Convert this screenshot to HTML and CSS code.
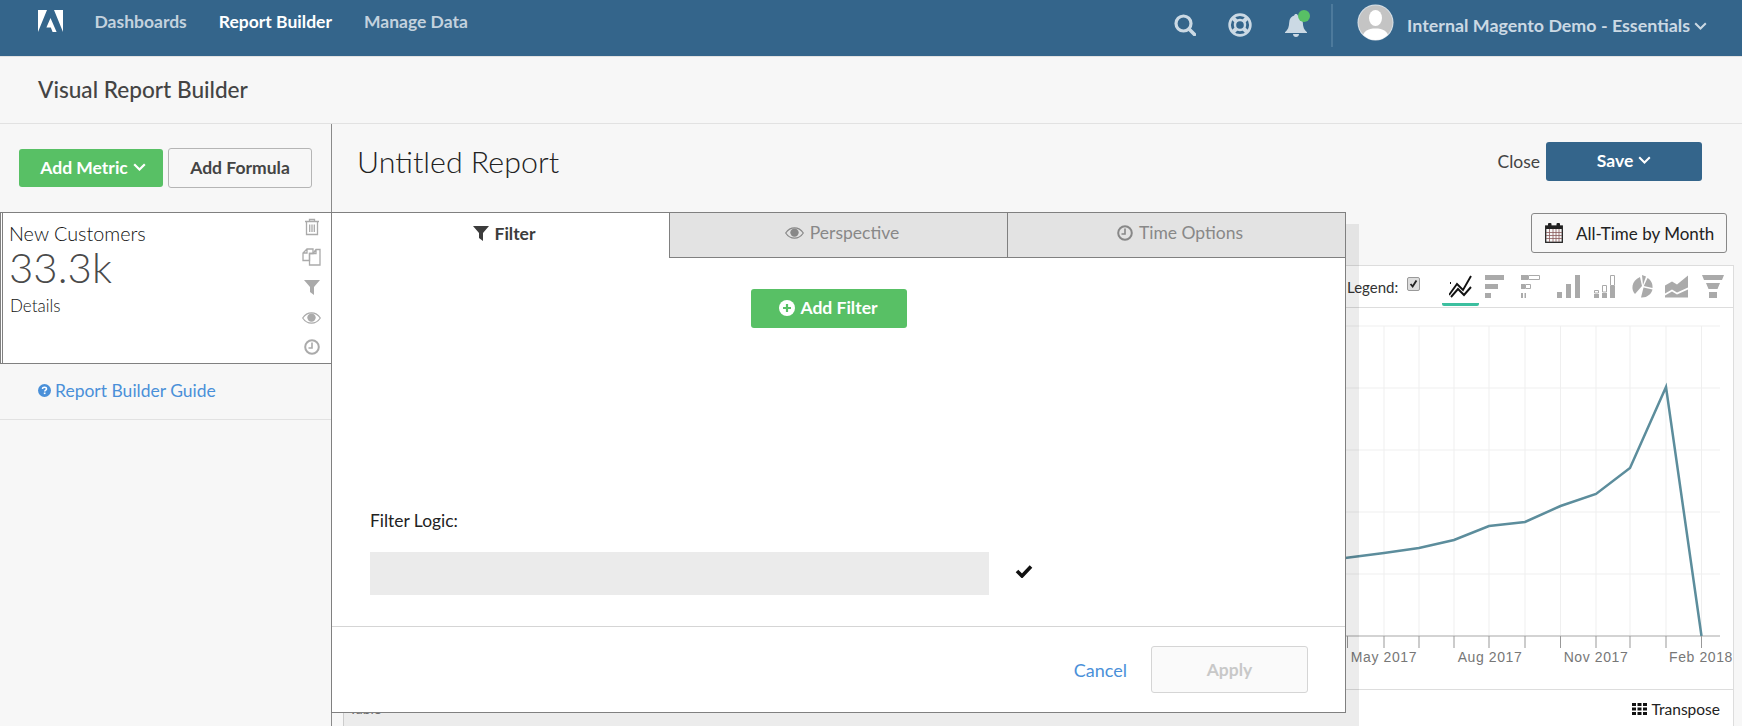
FILE: index.html
```html
<!DOCTYPE html>
<html lang="en">
<head>
<meta charset="utf-8">
<title>Visual Report Builder</title>
<link rel="stylesheet" href="styles.css">
</head>
<body>
<nav class="nav">
  <svg class="logo" viewBox="0 0 25 22"><path d="M0 0H9L0 22ZM16 0H25V22ZM12.5 8L18.6 22H14.6L12.8 17.4H8.4Z" fill="#fff"/></svg>
  <a class="nav-link">Dashboards</a>
  <a class="nav-link active">Report Builder</a>
  <a class="nav-link">Manage Data</a>
  <div class="nav-right">
    <svg class="ic-search" viewBox="0 0 22 22"><circle cx="9.5" cy="9.5" r="7.5" fill="none" stroke="#cbd9e4" stroke-width="3.2"/><path d="M15 15L20.5 20.5" stroke="#cbd9e4" stroke-width="3.6" stroke-linecap="round"/></svg>
    <svg class="ic-help" viewBox="0 0 24 24"><circle cx="12" cy="12" r="10.4" fill="none" stroke="#cbd9e4" stroke-width="2.6"/><circle cx="12" cy="12" r="5" fill="none" stroke="#cbd9e4" stroke-width="2.4"/><path d="M4.5 4.5L8.5 8.5M19.5 4.5L15.5 8.5M4.5 19.5L8.5 15.5M19.5 19.5L15.5 15.5" stroke="#cbd9e4" stroke-width="4"/></svg>
    <span class="bell-wrap">
      <svg class="ic-bell" viewBox="0 0 22 24"><path d="M11 1C12 1 12.800 1.700 12.800 2.600C16 3.400 17.600 6 17.800 9.500C18 14 19 16.800 22 19.200V20H0V19.200C3 16.800 4 14 4.200 9.500C4.400 6 6 3.400 9.200 2.600C9.200 1.700 10 1 11 1ZM8 21H14C14 22.800 12.600 24 11 24C9.400 24 8 22.800 8 21Z" fill="#cbd9e4"/></svg>
      <span class="bell-dot"></span>
    </span>
    <span class="nav-divider"></span>
    <svg class="avatar" viewBox="0 0 37 37"><defs><clipPath id="av"><circle cx="18.500" cy="18.500" r="17.500"/></clipPath></defs><circle cx="18.500" cy="18.500" r="18" fill="#d7e0e7"/><circle cx="18.500" cy="18.500" r="17" fill="#c4c4c4"/><g clip-path="url(#av)"><ellipse cx="18.500" cy="14" rx="6.500" ry="8" fill="#fff"/><path d="M5 37C5 27 11 24.500 18.500 24.500S32 27 32 37Z" fill="#fff"/></g></svg>
    <span class="account">Internal Magento Demo - Essentials</span>
    <svg class="caret caret-nav" viewBox="0 0 13 8"><path d="M1.200 1.200L6.500 6.500L11.800 1.200" fill="none" stroke="#cbd9e4" stroke-width="2"/></svg>
  </div>
</nav>

<header class="subheader"><h1 class="page-title">Visual Report Builder</h1></header>

<div class="workspace">
  <aside class="sidebar">
    <div class="side-actions">
      <button class="btn btn-green btn-metric">Add Metric <svg class="caret" viewBox="0 0 13 8"><path d="M1.200 1.200L6.500 6.500L11.800 1.200" fill="none" stroke="#fff" stroke-width="2.200"/></svg></button>
      <button class="btn btn-outline">Add Formula</button>
    </div>
    <section class="metric-card">
      <div class="metric-text">
        <div class="metric-name">New Customers</div>
        <div class="metric-value">33.3k</div>
        <div class="metric-details">Details</div>
      </div>
      <div class="metric-icons">
        <svg class="mi mi-trash" viewBox="0 0 16 18"><path d="M1 3.500H15M5.500 3.500V1.500H10.500V3.500M2.500 3.500V16.500H13.500V3.500M5.700 6.500V14M8 6.500V14M10.300 6.500V14" fill="none" stroke="#aaa" stroke-width="1.300"/></svg>
        <svg class="mi mi-copy" viewBox="0 0 19 18"><path d="M5 1H11V5.500H7.500V12.500H1V5ZM5 1V5H1" fill="none" stroke="#aaa" stroke-width="1.300"/><path d="M7.500 5.500H11L14 1.500H18V17H7.500ZM14 1.500V5.500H11" fill="none" stroke="#aaa" stroke-width="1.300"/></svg>
        <svg class="mi mi-filter" viewBox="0 0 16 15"><path d="M0 0H16L10 7V15L6 12V7Z" fill="#aaa"/></svg>
        <svg class="mi mi-eye" viewBox="0 0 19 12"><path d="M.7 6C3 2.500 6 .8 9.500 .8S16 2.500 18.300 6C16 9.500 13 11.200 9.500 11.200S3 9.500 .7 6Z" fill="none" stroke="#aaa" stroke-width="1.200"/><circle cx="9.500" cy="5.600" r="4.200" fill="#aaa"/></svg>
        <svg class="mi mi-clock" viewBox="0 0 16 16"><circle cx="8" cy="8" r="6.800" fill="none" stroke="#aaa" stroke-width="2"/><path d="M8 3.500V9H4.500" fill="none" stroke="#aaa" stroke-width="1.600"/></svg>
      </div>
    </section>
    <div class="guide">
      <svg class="guide-icon" viewBox="0 0 13 13"><circle cx="6.500" cy="6.500" r="6.500" fill="#4a90d9"/><path d="M4.500 5C4.500 3.800 5.400 3.200 6.500 3.200S8.500 3.800 8.500 4.900C8.500 6.200 6.700 6.200 6.700 7.600" fill="none" stroke="#fff" stroke-width="1.500"/><rect x="5.800" y="8.500" width="1.700" height="1.600" fill="#fff"/></svg>
      <a class="guide-link">Report Builder Guide</a>
    </div>
  </aside>

  <main class="main">
    <div class="title-row">
      <h2 class="report-title">Untitled Report</h2>
      <div class="title-actions">
        <span class="close-link">Close</span>
        <button class="btn btn-blue">Save <svg class="caret" viewBox="0 0 13 8"><path d="M1.200 1.200L6.500 6.500L11.800 1.200" fill="none" stroke="#fff" stroke-width="2"/></svg></button>
      </div>
    </div>
    <div class="range-row">
      <button class="btn-range">
        <svg class="ic-cal" viewBox="0 0 18 20"><rect x=".7" y="3" width="16.600" height="16.300" fill="none" stroke="#222" stroke-width="1.300"/><rect x="1" y="3" width="16" height="3" fill="#222"/><rect x="3" y="0" width="3.500" height="5.500" rx="1" fill="#222"/><rect x="11.500" y="0" width="3.500" height="5.500" rx="1" fill="#222"/><path d="M1 9.500H17M1 12.500H17M1 15.500H17M4.500 6V19M8 6V19M11 6V19M14 6V19" stroke="#8a5a5a" stroke-width=".8"/></svg>
        <span class="range-text">All-Time by Month</span>
      </button>
    </div>
    <section class="panel">
      <div class="panel-head">
        <span class="legend-label">Legend:</span>
        <span class="legend-box"><svg viewBox="0 0 13 13"><path d="M3 6.500L5.500 9.500L10 2.500" fill="none" stroke="#222" stroke-width="2.200"/></svg></span>
        <div class="chart-types">
          <span class="ct ct-on"><svg class="ct-line" viewBox="0 0 23 23"><path d="M0 20L8 9L14 15L22 1M1 8L2 8M2 22L9 14L15 20L22 12" fill="none" stroke="#111" stroke-width="1.900"/></svg></span>
          <span class="ct"><svg class="ct-hbar" viewBox="0 0 19 23"><path d="M0 0H19V5H0ZM0 9H13V14H0ZM0 18H6V23H0Z" fill="#aaa"/></svg></span>
          <span class="ct"><svg class="ct-hstack" viewBox="0 0 19 23"><path d="M0 0H7V5H0ZM0 9H4V14H0ZM0 18H2V23H0ZM3.500 18H5V23H3.500Z" fill="#aaa"/><path d="M7.500 .5H18.500V4.500H7.500ZM4.500 9.500H9.500V13.500H4.500Z" fill="none" stroke="#aaa"/></svg></span>
          <span class="ct"><svg class="ct-vbar" viewBox="0 0 23 23"><path d="M0 17H5V23H0ZM9 9H14V23H9ZM18 0H23V23H18Z" fill="#aaa"/></svg></span>
          <span class="ct"><svg class="ct-vstack" viewBox="0 0 22 23"><path d="M0 19H5V23H0ZM8 18H13V23H8ZM16 11H21V23H16Z" fill="#aaa"/><path d="M.5 15.500H4.500V18H.5ZM8.500 10.500H12.500V17H8.500ZM16.500 .5H20.500V10.500H16.500Z" fill="none" stroke="#aaa"/></svg></span>
          <span class="ct"><svg class="ct-pie" viewBox="0 0 22 23"><path d="M9 2L11 11L4 19C0 15 0 6 9 2ZM11 0L15 1.500L12 10ZM16.500 3C20 5 22 9 21.500 13L12.800 11ZM21.500 14.500C20.500 19 16 23 10 22.500L12.500 12.500Z" fill="#aaa"/></svg></span>
          <span class="ct"><svg class="ct-area" viewBox="0 0 23 22"><path d="M0 10L7 6L12 9L23 0V12L12 17L7 14L0 18ZM0 20L7 16L12 19L23 14V22H0Z" fill="#aaa"/></svg></span>
          <span class="ct"><svg class="ct-funnel" viewBox="0 0 22 23"><path d="M0 0H22L20 5H2ZM4 8H18L15.500 14H6.500ZM7 17H15V23H7Z" fill="#aaa"/></svg></span>
        </div>
      </div>
      <svg class="chart" viewBox="344 308 1389 381">
        <g class="grid">
          <path d="M1384 326V636M1419 326V636M1454 326V636M1489 326V636M1525 326V636M1560.500 326V636M1596 326V636M1630 326V636M1666 326V636M1701.500 326V636"/>
          <path d="M344 326H1720M344 388H1720M344 450H1720M344 512H1720M344 574H1720"/>
        </g>
        <path class="axis" d="M344 636H1720"/>
        <path class="ticks" d="M1347.500 636V648M1384 636V648M1419 636V648M1454 636V648M1489 636V648M1525 636V648M1560.500 636V648M1596 636V648M1630 636V648M1666 636V648M1701.500 636V648"/>
        <polyline class="series" points="1345,558 1384,553 1419,548 1454,540 1489,526 1525,522 1560.500,506 1596,494 1630,468 1666,387 1701.500,636"/>
        <text class="axis-label" x="1384" y="662">May 2017</text>
        <text class="axis-label" x="1490" y="662">Aug 2017</text>
        <text class="axis-label" x="1596" y="662">Nov 2017</text>
        <text class="axis-label" x="1701" y="662">Feb 2018</text>
      </svg>
      <div class="panel-foot">
        <span class="table-label">Table</span>
        <span class="transpose">
          <svg class="ic-grid" viewBox="0 0 15 12"><path d="M0 0H4V3H0ZM5.500 0H9.500V3H5.500ZM11 0H15V3H11ZM0 4.500H4V7.500H0ZM5.500 4.500H9.500V7.500H5.500ZM11 4.500H15V7.500H11ZM0 9H4V12H0ZM5.500 9H9.500V12H5.500ZM11 9H15V12H11Z" fill="#111"/></svg>
          Transpose
        </span>
      </div>
    </section>
  </main>
</div>

<div class="modal-shadow"></div>
<div class="modal">
  <div class="tabs">
    <div class="tab tab-on"><svg class="tab-filter" viewBox="0 0 16 15"><path d="M0 0H16L10 7V15L6 12V7Z" fill="#3c3c3c"/></svg>Filter</div>
    <div class="tab"><svg class="tab-eye" viewBox="0 0 19 12"><path d="M.7 6C3 2.500 6 .8 9.500 .8S16 2.500 18.300 6C16 9.500 13 11.200 9.500 11.200S3 9.500 .7 6Z" fill="none" stroke="#888" stroke-width="1.200"/><circle cx="9.500" cy="5.600" r="4.200" fill="#888"/></svg>Perspective</div>
    <div class="tab"><svg class="tab-clock" viewBox="0 0 16 16"><circle cx="8" cy="8" r="6.800" fill="none" stroke="#888" stroke-width="2"/><path d="M8 3.500V9H4.500" fill="none" stroke="#888" stroke-width="1.600"/></svg>Time Options</div>
  </div>
  <div class="modal-body">
    <div class="filter-action">
      <button class="btn btn-green btn-filter"><svg class="ic-plus" viewBox="0 0 16 16"><circle cx="8" cy="8" r="8" fill="#fff"/><path d="M8 4V12M4 8H12" stroke="#58c065" stroke-width="2.200"/></svg>Add Filter</button>
    </div>
    <label class="logic-label">Filter Logic:</label>
    <div class="logic-row">
      <div class="logic-input"></div>
      <svg class="ic-check" viewBox="0 0 18 14"><path d="M2 7L7 12L16 2.500" fill="none" stroke="#111" stroke-width="3.600"/></svg>
    </div>
  </div>
  <div class="modal-foot">
    <a class="cancel">Cancel</a>
    <button class="btn-apply">Apply</button>
  </div>
</div>
</body>
</html>
```
FILE: styles.css
```css
* { box-sizing: border-box; }
html, body { margin: 0; padding: 0; height: 726px; overflow: hidden; }
body { position: relative; background: #f7f7f7; font-family: Lato, "Open Sans", sans-serif; color: #444; }
svg { display: block; flex: none; }
button { font-family: inherit; cursor: pointer; }

.nav { display: flex; align-items: center; height: 57px; background: #34658b; border-bottom: 1px solid #e2e2e2; padding: 0 35px 13px 38px; }
.logo { width: 25px; height: 22px; margin: -1px 31.500px 0 0; }
.nav-link { font-size: 17.500px; font-weight: 700; color: #c3d2de; margin-right: 32px; }
.nav-link.active { color: #fff; }
.nav-right { margin-left: auto; display: flex; align-items: center; height: 47px; margin-top: 7px; }
.ic-search { width: 22px; height: 22px; margin-right: 32px; }
.ic-help { width: 24px; height: 24px; margin-right: 33px; }
.bell-wrap { position: relative; display: block; margin-right: 24px; }
.ic-bell { width: 22px; height: 24px; }
.bell-dot { position: absolute; right: -3px; top: -3px; width: 12px; height: 12px; border-radius: 50%; background: #58c065; }
.nav-divider { width: 2px; height: 43px; background: #4d7a9c; margin-right: 24px; }
.avatar { width: 37px; height: 37px; margin: -6px 13px 0 0; }
.account { font-size: 17.850px; font-weight: 700; color: #cbd9e4; white-space: nowrap; }
.caret { display: inline-block; width: 13px; height: 8px; }
.caret-nav { margin: 2px 0 0 4px; }

.subheader { height: 67px; border-bottom: 1px solid #e2e2e2; padding: 0 38px 2px; display: flex; align-items: center; }
.page-title { margin: 0; font-size: 22.600px; font-weight: 500; color: #444; }

.workspace { display: flex; height: 602px; }
.sidebar { width: 332px; flex: none; border-right: 1px solid #8a8a8a; padding-top: 24px; }
.side-actions { display: flex; align-items: center; gap: 5px; padding-left: 19px; height: 40px; }
.btn { border-radius: 3px; border: 0; font-size: 17.500px; font-weight: 700; display: flex; align-items: center; justify-content: center; padding: 0 0 2px; }
.btn-green { background: #58c065; color: #fff; }
.btn-metric { width: 144px; height: 38px; gap: 5px; padding-left: 4px; }
.btn-outline { width: 144px; height: 40px; background: #f7f7f7; border: 1px solid #b5b5b5; color: #444; }
.metric-card { display: flex; justify-content: space-between; height: 152px; margin-top: 24px; margin-right: -1px; background: #fff; border: 1px solid #808080; border-left: 3px double #808080; padding: 0 10px 0 6px; position: relative; }
.metric-name { font-size: 19.800px; font-weight: 300; color: #111; margin-top: 9px; line-height: 22px; }
.metric-value { font-size: 42px; font-weight: 300; color: #4a4a4a; line-height: 46px; }
.metric-details { font-size: 17px; font-weight: 300; color: #111; margin: 6px 0 0 1px; line-height: 20px; }
.metric-icons { display: flex; flex-direction: column; align-items: center; width: 19px; padding-top: 5px; }
.mi { display: block; }
.mi-trash { width: 16px; height: 18px; }
.mi-copy { width: 19px; height: 18px; margin-top: 12px; }
.mi-filter { width: 16px; height: 15px; margin-top: 14px; }
.mi-eye { width: 19px; height: 12px; margin-top: 17px; }
.mi-clock { width: 16px; height: 16px; margin-top: 15px; }
.guide { height: 56px; border-bottom: 1px solid #e2e2e2; display: flex; align-items: center; gap: 4px; padding: 0 0 2px 38px; }
.guide-icon { width: 13px; height: 13px; }
.guide-link { font-size: 17.500px; color: #4a90d9; }

.main { flex: 1; padding: 0 8px 0 11px; min-width: 0; }
.title-row { display: flex; justify-content: space-between; align-items: center; height: 64px; margin-top: 5px; padding: 0 32px 0 14px; }
.report-title { margin: 0; font-size: 30.400px; font-weight: 300; color: #222; }
.title-actions { display: flex; align-items: center; gap: 6px; }
.close-link { font-size: 17.500px; color: #444; }
.btn-blue { width: 156px; height: 39px; background: #34658b; color: #fff; gap: 5px; }
.range-row { display: flex; justify-content: flex-end; height: 40px; margin-top: 20px; padding-right: 7px; }
.btn-range { display: flex; align-items: center; gap: 13px; width: 196px; height: 40px; border: 1px solid #888; border-radius: 3px; background: #f7f7f7; color: #222; font-size: 17px; padding: 0 0 0 13px; }
.range-text { white-space: nowrap; }
.ic-cal { width: 18px; height: 20px; }
.panel { margin-top: 12px; height: 461px; background: #fff; border: 1px solid #ddd; border-bottom: 0; }
.panel-head { height: 42px; border-bottom: 1px solid #ddd; display: flex; align-items: center; padding-left: 1003px; }
.legend-label { font-size: 15px; color: #333; width: 60px; }
.legend-box { width: 13px; height: 14px; background: #ddd; border: 1px solid #999; border-radius: 2px; margin-top: -5px; }
.legend-box svg { width: 11px; height: 12px; }
.chart-types { display: flex; align-items: flex-start; margin-left: 22px; padding-top: 6px; height: 36px; }
.ct { display: block; }
.ct-on { width: 37px; height: 31px; border-bottom: 3px solid #3cbf9f; border-radius: 0 0 2px 2px; padding-left: 7px; margin-right: 6px; }
.ct-line { width: 23px; height: 23px; }
.ct-hbar { width: 19px; height: 23px; margin-right: 17px; }
.ct-hstack { width: 19px; height: 23px; margin-right: 17px; }
.ct-vbar { width: 23px; height: 23px; margin-right: 14px; }
.ct-vstack { width: 22px; height: 23px; margin-right: 15px; }
.ct-pie { width: 22px; height: 23px; margin-right: 12px; }
.ct-area { width: 23px; height: 23px; margin-right: 14px; }
.ct-funnel { width: 22px; height: 23px; }
.chart { width: 1389px; height: 381px; }
.grid path { fill: none; stroke: #efefef; stroke-width: 1; }
.axis { fill: none; stroke: #c4c4c4; stroke-width: 1.500; }
.ticks { fill: none; stroke: #999; stroke-width: 1; }
.series { fill: none; stroke: #5c8d9c; stroke-width: 2.500; }
.axis-label { font-family: "Liberation Sans", sans-serif; font-size: 14px; letter-spacing: .6px; fill: #777; text-anchor: middle; }
.panel-foot { border-top: 1px solid #ddd; height: 38px; display: flex; justify-content: space-between; align-items: center; padding: 0 13px 0 5px; }
.table-label { font-size: 14px; color: #777; }
.transpose { display: flex; align-items: center; gap: 5px; font-size: 15.500px; color: #222; }
.ic-grid { width: 15px; height: 12px; }

.modal-shadow { position: absolute; left: 343px; top: 224px; width: 1016px; height: 502px; background: rgba(0, 0, 0, .075); }
.modal { position: absolute; left: 331px; top: 212px; width: 1015px; height: 501px; background: #fff; border: 1px solid #808080; display: flex; flex-direction: column; }
.tabs { display: flex; height: 45px; flex: none; }
.tab { flex: 1; display: flex; align-items: center; justify-content: center; gap: 6px; font-size: 17.500px; color: #888; background: #e3e3e3; border-bottom: 1px solid #808080; border-left: 1px solid #808080; padding: 0 0 5px 7px; }
.tab-on { background: #fff; color: #3c3c3c; font-weight: 700; border: 0; }
.tab-filter { width: 16px; height: 15px; }
.tab-eye { width: 19px; height: 12px; }
.tab-clock { width: 16px; height: 16px; }
.modal-body { flex: 1; padding: 0 38px; }
.filter-action { display: flex; justify-content: center; padding: 31px 0 0; margin-right: 20px; }
.btn-filter { width: 156px; height: 39px; gap: 5px; }
.ic-plus { width: 16px; height: 16px; }
.logic-label { display: block; margin-top: 183px; font-size: 17.400px; line-height: 20px; color: #222; }
.logic-row { display: flex; align-items: center; margin-top: 21px; }
.logic-input { width: 619px; height: 43px; background: #ebebeb; }
.ic-check { width: 18px; height: 14px; margin: -6px 0 0 26px; }
.modal-foot { height: 86px; flex: none; border-top: 1px solid #d5d5d5; display: flex; align-items: center; justify-content: flex-end; gap: 24px; padding-right: 37px; }
.cancel { font-size: 18px; color: #4a90d9; }
.btn-apply { width: 157px; height: 47px; border: 1px solid #d5d5d5; border-radius: 3px; background: #fafafa; font-size: 17.500px; font-weight: 700; color: #c8c8c8; padding-bottom: 2px; }
```
